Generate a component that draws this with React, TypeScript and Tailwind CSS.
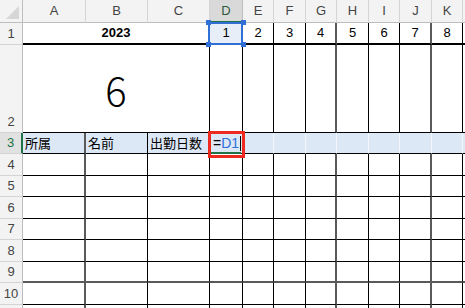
import React from "react";

const colHeaders = ["A", "B", "C", "D", "E", "F", "G", "H", "I", "J", "K"];

const hdr =
  "bg-[#f3f3f3] border-r border-b border-r-[#d4d4d4] border-b-[#bdbdbd] flex items-center justify-center text-[13px] text-[#444] [font-family:'Liberation_Sans',sans-serif]";
const rowHdr =
  "bg-[#f3f3f3] border-r border-b border-r-[#bdbdbd] border-b-[#d4d4d4] flex items-end justify-center text-[13px] leading-[20px] text-[#444] [font-family:'Liberation_Sans',sans-serif]";

// vertical line style per data column index (0 = A ... 10 = K)
const vline = (i: number) =>
  i === 0 || i === 6 || i === 9 ? "border-r-2 border-r-[#5a5a5a]" : "border-r border-r-black";

export default function App() {
  const rowsBody = [4, 5, 6, 7, 8, 9, 10];
  return (
    <div className="w-[465px] h-[308px] overflow-hidden bg-white [font-family:'Liberation_Sans','Noto_Sans_CJK_JP',sans-serif]">
      <div className="grid grid-cols-[23px_63px_62px_62px_33px_31px_32px_31px_32px_31px_32px_31px_2px] grid-rows-[23px_22px_88px_21px_22px_21px_22px_21px_22px_21px_22px_3px]">
        {/* header row */}
        <div className="relative bg-[#f3f3f3] border-r border-b border-[#bdbdbd]">
          <div className="absolute right-[3px] bottom-[3px] w-0 h-0 border-l-[13px] border-l-transparent border-b-[13px] border-b-[#d6d6d6]" />
        </div>
        {colHeaders.map((c) =>
          c === "D" ? (
            <div
              key={c}
              className="bg-[#d9d9d9] border-r border-r-[#bdbdbd] border-b-2 border-b-[#217346] flex items-center justify-center text-[13px] text-[#2b5a3c] [font-family:'Liberation_Sans',sans-serif]"
            >
              {c}
            </div>
          ) : (
            <div key={c} className={hdr}>
              {c}
            </div>
          )
        )}
        <div className="bg-[#f3f3f3] border-b border-b-[#bdbdbd]" />

        {/* row 1 */}
        <div className={rowHdr}>1</div>
        <div className="col-span-3 border-r border-r-black border-b-2 border-b-black flex items-center justify-center text-[13px] font-bold text-black">
          2023
        </div>
        <div className="relative bg-[#e8eef8] border-r border-r-black border-b-2 border-b-black flex items-center justify-center text-[13px] text-black">
          1
          <div className="absolute left-[-2px] top-[-1px] w-[35px] h-[23px] border-2 border-[#2f6fd6]" />
          <div className="absolute left-[-4px] top-[-3px] w-[5px] h-[5px] bg-[#2f6fd6]" />
          <div className="absolute right-[-4px] top-[-3px] w-[5px] h-[5px] bg-[#2f6fd6]" />
          <div className="absolute left-[-4px] bottom-[-4px] w-[5px] h-[5px] bg-[#2f6fd6]" />
          <div className="absolute right-[-4px] bottom-[-4px] w-[5px] h-[5px] bg-[#2f6fd6]" />
        </div>
        {[2, 3, 4, 5, 6, 7, 8].map((n, k) => (
          <div
            key={n}
            className={`${vline(k + 4)} border-b-2 border-b-black flex items-center justify-center text-[13px] text-black`}
          >
            {n}
          </div>
        ))}
        <div className="border-b-2 border-b-black" />

        {/* row 2 */}
        <div className={rowHdr}>2</div>
        <div className="col-span-3 border-r border-r-black border-b border-b-black flex items-center justify-center text-[40px] font-light text-black [font-family:'Noto_Sans_CJK_JP',sans-serif]">
          6
        </div>
        {[3, 4, 5, 6, 7, 8, 9, 10].map((i) => (
          <div key={i} className={`${vline(i)} border-b border-b-black`} />
        ))}
        <div className="border-b border-b-black" />

        {/* row 3 */}
        <div className="bg-[#e1e1e1] border-r-2 border-r-[#217346] border-b border-b-[#d4d4d4] flex items-end justify-center text-[13px] leading-[20px] text-[#217346] [font-family:'Liberation_Sans',sans-serif]">
          3
        </div>
        <div className={`bg-[#dde8f6] ${vline(0)} border-b border-b-black flex items-center pl-[2px] text-[13px] text-black [font-family:'Noto_Sans_CJK_JP',sans-serif]`}>
          所属
        </div>
        <div className={`bg-[#dde8f6] ${vline(1)} border-b border-b-black flex items-center pl-[2px] text-[13px] text-black [font-family:'Noto_Sans_CJK_JP',sans-serif]`}>
          名前
        </div>
        <div className={`bg-[#dde8f6] ${vline(2)} border-b border-b-black flex items-center pl-[2px] text-[13px] text-black [font-family:'Noto_Sans_CJK_JP',sans-serif]`}>
          出勤日数
        </div>
        <div className="relative bg-[#dde8f6] border-b border-b-black flex items-center pl-[3px] text-[14px] [font-family:'Liberation_Sans',sans-serif]">
          <span className="text-black">=</span>
          <span className="text-[#2f6fd6]">D1</span>
          <span className="ml-[1px] w-px h-[15px] bg-black" />
          <div className="absolute left-0 right-[2px] bottom-[-1px] h-[2px] bg-[#217346]" />
          <div className="absolute left-[-2px] top-[-2px] w-[37px] h-[27px] border-[3px] border-[#ee2a1f]" />
        </div>
        {[4, 5, 6, 7, 8, 9, 10].map((i) => (
          <div key={i} className="bg-[#dde8f6] border-r border-r-[#f2f6fb] border-b border-b-black" />
        ))}
        <div className="bg-[#dde8f6] border-b border-b-black" />

        {/* rows 4-10 */}
        {rowsBody.map((r) => (
          <React.Fragment key={r}>
            <div className={rowHdr}>{r}</div>
            {Array.from({ length: 11 }).map((_, i) => (
              <div
                key={i}
                className={`${vline(i)} ${r === 9 ? "border-b-2 border-b-[#5a5a5a]" : "border-b border-b-black"}`}
              />
            ))}
            <div className={r === 9 ? "border-b-2 border-b-[#5a5a5a]" : "border-b border-b-black"} />
          </React.Fragment>
        ))}

        {/* row 11 (cut off) */}
        <div className="bg-[#f3f3f3] border-r border-r-[#bdbdbd]" />
        {Array.from({ length: 11 }).map((_, i) => (
          <div key={i} className={vline(i)} />
        ))}
        <div />
      </div>
    </div>
  );
}
